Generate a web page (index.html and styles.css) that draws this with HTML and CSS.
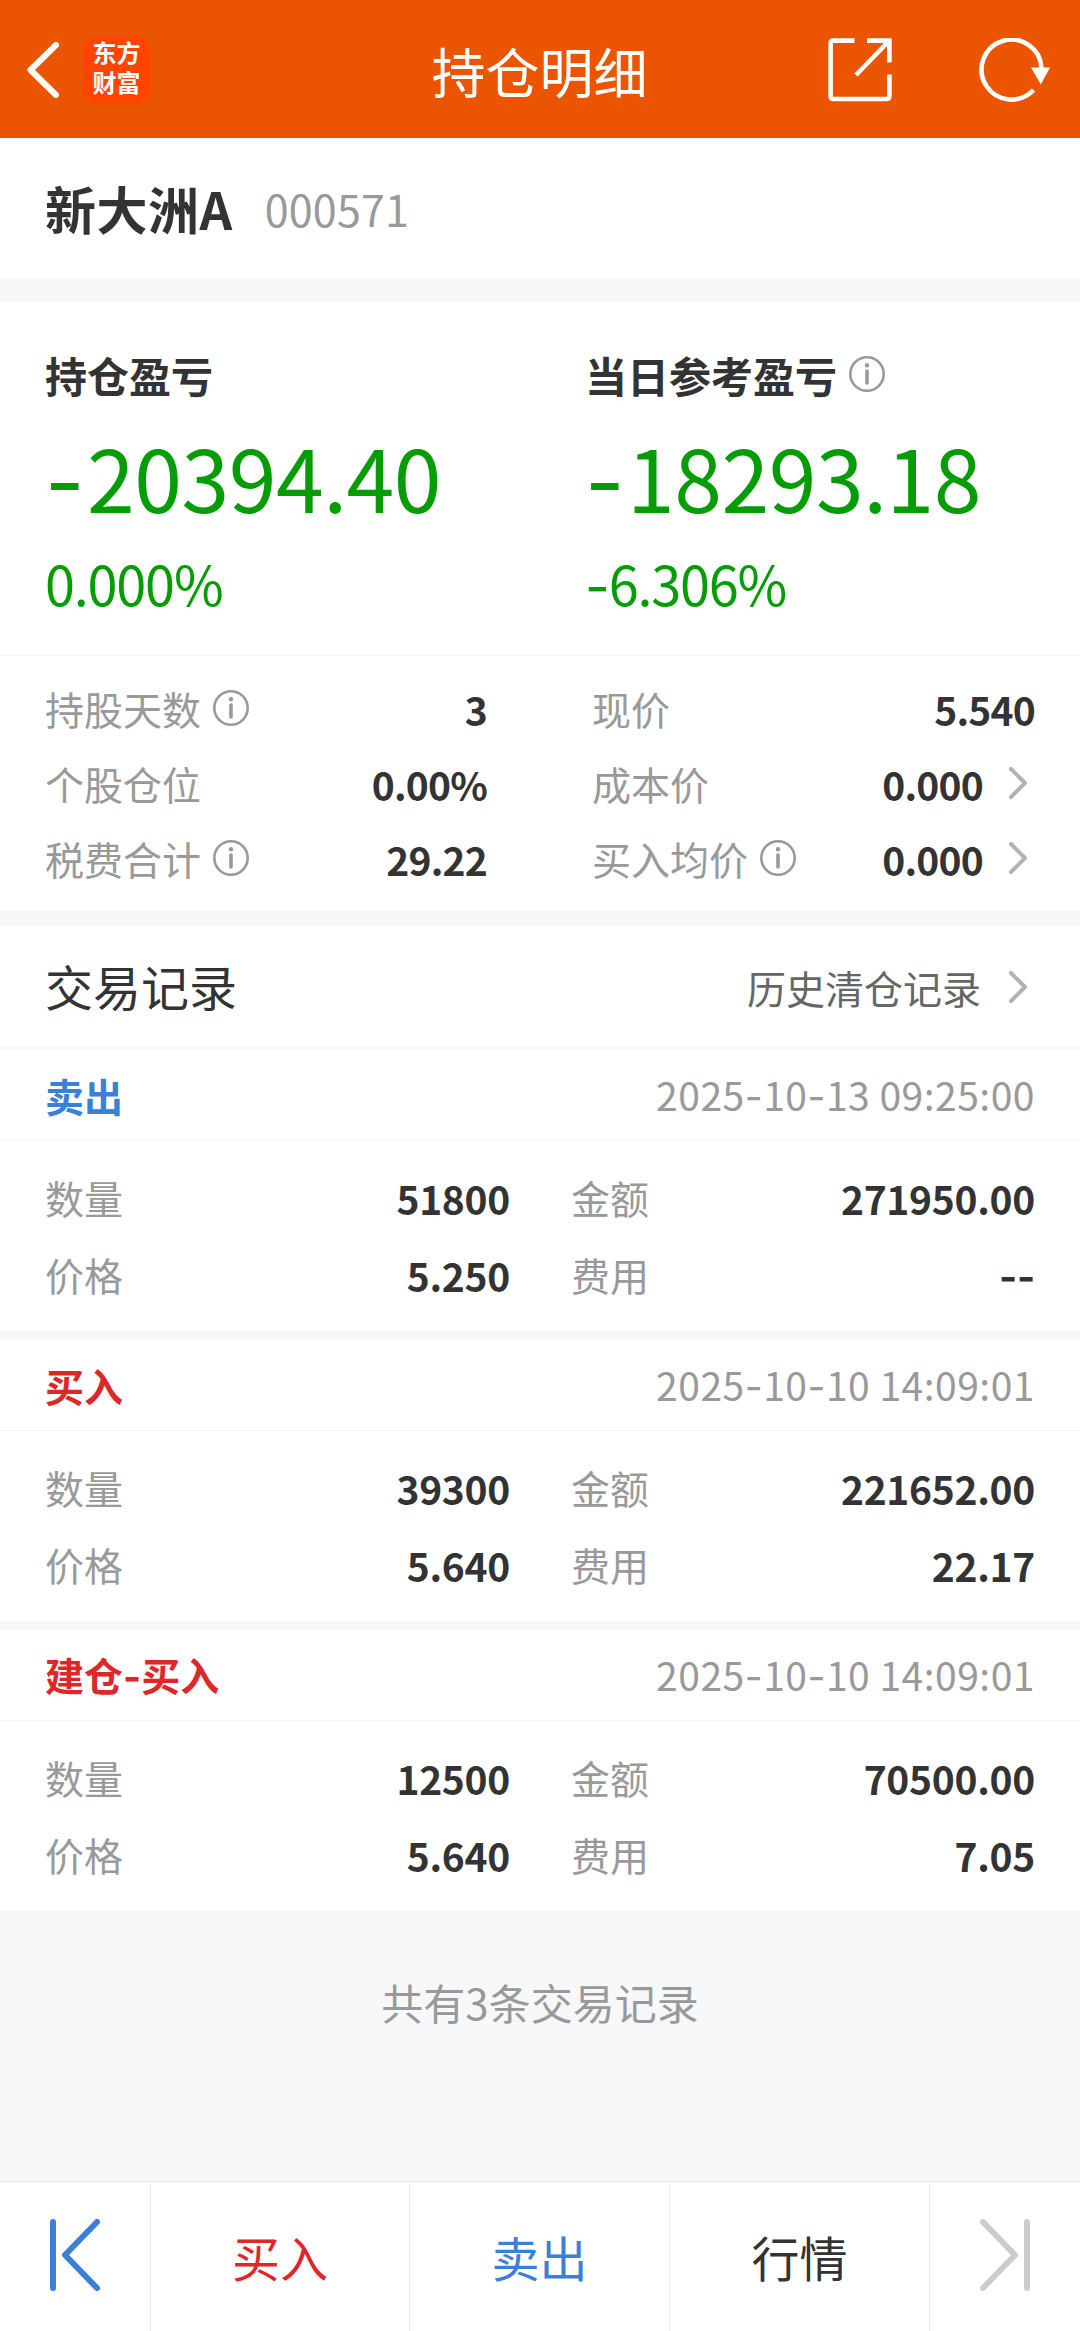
FILE: index.html
```html
<!DOCTYPE html>
<html lang="zh-CN">
<head>
    <meta charset="UTF-8">
    <meta name="viewport" content="width=device-width, initial-scale=1.0">
    <title>持仓明细</title>
    <link rel="stylesheet" href="styles.css">
</head>
<body>
    <svg class="symbols">
        <symbol id="info" viewBox="0 0 36 36">
            <circle cx="18" cy="18" r="16.7" fill="none" stroke="currentColor" stroke-width="2.6"/>
            <circle cx="18" cy="9.2" r="2.2" fill="currentColor"/>
            <path d="M18 15v12" stroke="currentColor" stroke-width="3.6" stroke-linecap="round"/>
        </symbol>
        <symbol id="arrow" viewBox="0 0 18 32">
            <path d="M2 2l14 14L2 30" fill="none" stroke="currentColor" stroke-width="4" stroke-linecap="round" stroke-linejoin="round"/>
        </symbol>
    </svg>

    <header class="topbar">
        <div class="topbar-left">
            <svg class="back" viewBox="0 0 32 56"><path d="M29 3L3.5 28L29 53" fill="none" stroke="currentColor" stroke-width="6" stroke-linecap="round" stroke-linejoin="round"/></svg>
            <div class="logo"><span>东方</span><span>财富</span></div>
        </div>
        <h1>持仓明细</h1>
        <div class="topbar-right">
            <svg class="share" viewBox="0 0 64 64" fill="none" stroke="currentColor" stroke-width="4.6">
                <path d="M26.500 2.600H5.500Q2.600 2.600 2.600 5.500V58Q2.600 61 5.500 61H58.500Q61.400 61 61.400 58V36.500"/>
                <path d="M39 2.600H61.400V24.500M60 4L28 37"/>
            </svg>
            <svg class="refresh" viewBox="0 0 72 64">
                <path d="M54.500 52A30 30 0 1 1 62.500 30" fill="none" stroke="currentColor" stroke-width="4.600"/>
                <path d="M52 29.500H71L61.800 46.500Z" fill="currentColor"/>
            </svg>
        </div>
    </header>

    <section class="stock">
        <h2>新大洲A</h2>
        <span class="code">000571</span>
    </section>

    <section class="profit">
        <div class="profit-item">
            <h3>持仓盈亏</h3>
            <p class="amount"><span class="dash">-</span>20394.40</p>
            <p class="percent">0.000%</p>
        </div>
        <div class="profit-item">
            <h3>当日参考盈亏 <svg class="info"><use href="#info"/></svg></h3>
            <p class="amount"><span class="dash">-</span>18293.18</p>
            <p class="percent"><span class="dash">-</span>6.306%</p>
        </div>
    </section>

    <section class="stats">
        <div class="stats-col">
            <div class="row"><label>持股天数 <svg class="info"><use href="#info"/></svg></label><b>3</b></div>
            <div class="row"><label>个股仓位</label><b>0.00%</b></div>
            <div class="row"><label>税费合计 <svg class="info"><use href="#info"/></svg></label><b>29.22</b></div>
        </div>
        <div class="stats-col">
            <div class="row"><label>现价</label><b>5.540</b></div>
            <div class="row"><label>成本价</label><b>0.000</b><svg class="arrow"><use href="#arrow"/></svg></div>
            <div class="row"><label>买入均价 <svg class="info"><use href="#info"/></svg></label><b>0.000</b><svg class="arrow"><use href="#arrow"/></svg></div>
        </div>
    </section>

    <section class="records-title">
        <h2>交易记录</h2>
        <a class="history">历史清仓记录<svg class="arrow"><use href="#arrow"/></svg></a>
    </section>

    <section class="record">
        <div class="record-head">
            <span class="sell">卖出</span>
            <time>2025<span class="dash">-</span>10<span class="dash">-</span>13 09:25:00</time>
        </div>
        <div class="record-body">
            <div class="row"><label>数量</label><b>51800</b></div>
            <div class="row"><label>金额</label><b>271950.00</b></div>
            <div class="row"><label>价格</label><b>5.250</b></div>
            <div class="row"><label>费用</label><b><span class="dash">--</span></b></div>
        </div>
    </section>

    <section class="record">
        <div class="record-head">
            <span class="buy">买入</span>
            <time>2025<span class="dash">-</span>10<span class="dash">-</span>10 14:09:01</time>
        </div>
        <div class="record-body">
            <div class="row"><label>数量</label><b>39300</b></div>
            <div class="row"><label>金额</label><b>221652.00</b></div>
            <div class="row"><label>价格</label><b>5.640</b></div>
            <div class="row"><label>费用</label><b>22.17</b></div>
        </div>
    </section>

    <section class="record">
        <div class="record-head">
            <span class="buy">建仓<span class="dash">-</span>买入</span>
            <time>2025<span class="dash">-</span>10<span class="dash">-</span>10 14:09:01</time>
        </div>
        <div class="record-body">
            <div class="row"><label>数量</label><b>12500</b></div>
            <div class="row"><label>金额</label><b>70500.00</b></div>
            <div class="row"><label>价格</label><b>5.640</b></div>
            <div class="row"><label>费用</label><b>7.05</b></div>
        </div>
    </section>

    <p class="count">共有3条交易记录</p>

    <footer class="tabbar">
        <a class="tab prev"><svg viewBox="0 0 50 72"><path d="M3 3V69M47 3L15 36L47 69" fill="none" stroke="currentColor" stroke-width="6" stroke-linecap="round" stroke-linejoin="round"/></svg></a>
        <a class="tab buy">买入</a>
        <a class="tab sell">卖出</a>
        <a class="tab">行情</a>
        <a class="tab next"><svg viewBox="0 0 50 72"><path d="M47 3V69M3 3L35 36L3 69" fill="none" stroke="currentColor" stroke-width="6" stroke-linecap="round" stroke-linejoin="round"/></svg></a>
    </footer>
</body>
</html>
```
FILE: styles.css
```css
* {
    box-sizing: border-box;
}
body {
    font-family: "Noto Sans CJK SC", sans-serif;
    margin: 0;
    min-height: 2331px;
    display: flex;
    flex-direction: column;
    background-color: #f7f8fa;
    color: #333;
    font-size: 39px;
    line-height: 1;
}
h1, h2, h3, p {
    margin: 0;
    line-height: 1;
}
section {
    background-color: #fff;
}
.symbols {
    display: none;
}
/* wider hyphen than the CJK font has */
.dash {
    font-family: Inter, sans-serif;
}
.buy {
    color: #dc2828;
}
.sell {
    color: #3a80d6;
}
.info {
    width: 36px;
    height: 36px;
    color: #999;
    flex: none;
}
.arrow {
    width: 18px;
    height: 32px;
    color: #b2b2b2;
    margin: 0 8px 1px 26px;
    flex: none;
}

.topbar {
    height: 138px;
    padding: 2px 29px 0 27px;
    background-color: #eb5502;
    color: #fff;
    display: grid;
    grid-template-columns: 1fr auto 1fr;
    align-items: center;
}
.topbar h1 {
    font-size: 54px;
    font-weight: 400;
    padding: 2px 0 0 1px;
}
.topbar-left, .topbar-right {
    display: flex;
    align-items: center;
}
.topbar-right {
    justify-content: flex-end;
    gap: 87px;
}
.back {
    width: 32px;
    height: 56px;
}
.logo {
    width: 67px;
    height: 68px;
    margin-left: 24px;
    border-radius: 15px;
    background-color: #ff4400;
    font-family: "Liberation Sans", "Noto Sans CJK SC", sans-serif;
    font-size: 24px;
    font-weight: 700;
    line-height: 30px;
    display: flex;
    flex-direction: column;
    align-items: center;
    padding-top: 3px;
}
.share {
    width: 64px;
    height: 64px;
}
.refresh {
    width: 72px;
    height: 64px;
}

.stock {
    height: 140px;
    margin-bottom: 24px;
    padding-left: 45px;
    display: flex;
    align-items: center;
    gap: 32px;
}
.stock h2 {
    font-size: 51px;
    letter-spacing: 0.5px;
}
.code {
    font-size: 43px;
    color: #999;
    letter-spacing: 0.2px;
}

.profit {
    height: 354px;
    padding: 52px 45px 0;
    border-bottom: 1px solid #f4f5f6;
    display: grid;
    grid-template-columns: 540px 1fr;
}
.profit h3 {
    height: 42px;
    font-size: 42px;
    display: flex;
    align-items: center;
    gap: 12px;
}
.profit h3 .info {
    margin-bottom: 2px;
}
.profit p {
    color: #069c06;
}
.profit .amount {
    font-size: 86px;
    letter-spacing: -0.5px;
    margin-top: 37px;
}
.amount .dash {
    margin-right: 3px;
}
.profit .percent {
    font-size: 54px;
    letter-spacing: -1.2px;
    margin-top: 31px;
}

.stats {
    height: 255px;
    margin-bottom: 15px;
    padding: 15px 45px 0;
    display: grid;
    grid-template-columns: 442px 443px;
    justify-content: space-between;
}
.row {
    display: flex;
    align-items: center;
    height: 75px;
}
.row label {
    flex: 1;
    display: flex;
    align-items: center;
    gap: 12px;
    color: #999;
}
.row .info {
    margin-bottom: 2px;
}
.row b {
    letter-spacing: -0.3px;
    padding-top: 2px;
}
.stats .row b {
    letter-spacing: -0.8px;
}

.records-title {
    height: 124px;
    padding: 0 45px;
    border-bottom: 4px solid #f7f8fa;
    display: flex;
    align-items: center;
    justify-content: space-between;
}
.records-title h2 {
    font-size: 48px;
    font-weight: 400;
    padding-bottom: 3px;
}
.history {
    display: flex;
    align-items: center;
    color: #666;
    padding-top: 3px;
}
.history .arrow {
    margin-left: 28px;
    margin-bottom: 2px;
}

.record {
    height: 281px;
    margin-bottom: 9px;
}
.record-head {
    height: 91px;
    padding: 0 45px;
    border-bottom: 1px solid #f4f5f6;
    display: flex;
    align-items: center;
    justify-content: space-between;
}
.record-head .buy, .record-head .sell {
    font-weight: 700;
}
.record-head time {
    color: #999;
    letter-spacing: 0.5px;
    padding-top: 1px;
}
.record-body {
    padding: 18px 45px 0;
    display: grid;
    grid-template-columns: 465px 464px;
    column-gap: 61px;
}
.record-body .row {
    height: 77px;
}

.count {
    margin-top: 61px;
    text-align: center;
    font-size: 42px;
    color: #999;
}

.tabbar {
    height: 150px;
    margin-top: auto;
    border-top: 1px solid #e9e9e9;
    background-color: #fff;
    display: grid;
    grid-template-columns: 151px 259px 260px 260px 150px;
}
.tab {
    display: flex;
    align-items: center;
    justify-content: center;
    font-size: 48px;
    padding-bottom: 2px;
    border-right: 1px solid #e9e9e9;
}
.tab:last-child {
    border-right: none;
}
.tab svg {
    width: 50px;
    height: 72px;
    margin-bottom: 2px;
}
.prev {
    color: #3a80d6;
}
.next {
    color: #ccc;
}
```
